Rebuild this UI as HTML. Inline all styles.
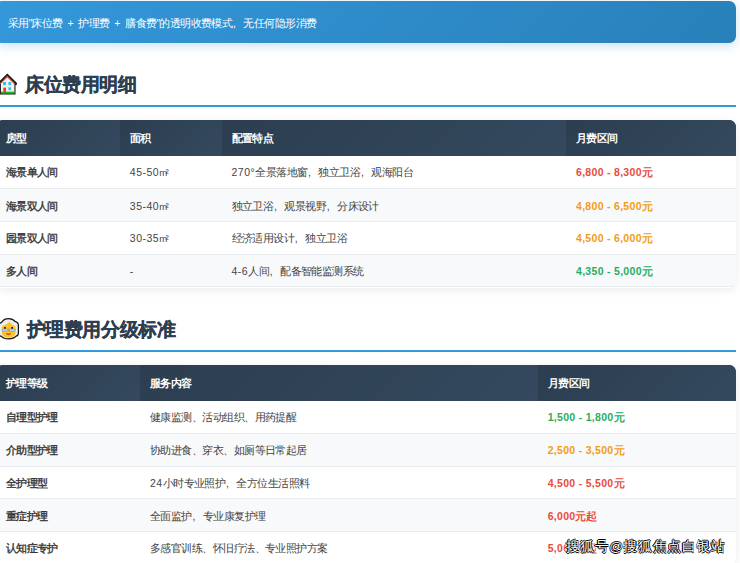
<!DOCTYPE html>
<html><head><meta charset="utf-8">
<style>
*{box-sizing:border-box;margin:0;padding:0}
html,body{width:740px;height:563px;overflow:hidden;background:#fff}
body{font-family:"Liberation Sans",sans-serif;color:#333;position:relative}
i{font-style:normal;letter-spacing:0}
i.c{display:inline-block;width:11px;padding-left:0.6px;letter-spacing:0}
.banner i{word-spacing:1.75px}
.banner i.q{letter-spacing:-1px}
b{font-weight:bold}
.banner{position:absolute;left:-5px;top:1px;width:741px;height:41.5px;border-radius:7px;
 background:linear-gradient(135deg,#3498db,#2980b9);box-shadow:0 3px 11px rgba(52,152,219,0.27);
 color:#fff;font-size:10.5px;letter-spacing:-0.55px}
.banner span{position:absolute;left:12.8px;top:14px;line-height:16px;white-space:nowrap}
.title{position:absolute;-webkit-text-stroke:0.3px #2c3e50;font-size:18.5px;letter-spacing:-0.4px;font-weight:bold;color:#2c3e50;line-height:24px;white-space:nowrap}
.line{position:absolute;left:-5px;width:741px;height:2px;background:#3498db}
.tbl{position:absolute;left:-4.4px;width:740.4px;border-radius:7px;overflow:hidden;box-shadow:0 2px 10px rgba(0,0,0,0.08);background:#fff}
.hbg{position:absolute;left:0;top:0;width:100%;height:36.2px;background:#2f4356}
.th{position:absolute;top:0;padding-top:1.2px;height:36.2px;line-height:35.8px;padding-left:10px;color:#fff;font-size:10.5px;letter-spacing:-0.55px;
 background:linear-gradient(135deg,#2c3e50,#34495e);white-space:nowrap}
.tr{position:absolute;left:0;width:100%;height:32.7px;background:#fff;border-bottom:1px solid #e9ecef}
.tr.odd{background:#f8f9fa}
.tr.last{}
.td{position:absolute;top:1.3px;height:31.7px;line-height:31.7px;padding-left:10px;font-size:10.5px;letter-spacing:-0.55px;color:#444;white-space:nowrap}
.td.n{font-weight:normal;-webkit-text-stroke:0.35px #333;color:#333}
.td.r{color:#e74c3c;font-weight:bold}
.td.o{color:#f39c12;font-weight:bold}
.td.g{color:#27ae60;font-weight:bold}
.td i{letter-spacing:0.5px}
.td i.m2{letter-spacing:0;font-size:9.6px}
i.m2 u{text-decoration:none;margin-left:-1.6px}
.td.r i,.td.o i,.td.g i{letter-spacing:0.3px}
.wm{position:absolute;left:565.5px;top:538.8px;font-size:13.5px;line-height:16px;letter-spacing:0.55px;color:#fff;white-space:nowrap;text-shadow:0.6px 0 0 #000,-0.6px 0 0 #000,0 0.6px 0 #000,0 -0.6px 0 #000,0.4px 0.4px 0 #000,-0.4px -0.4px 0 #000,0 0 3px #fff,0 0 3px #fff,0 0 4px #fff,0 0 4px #fff}
.icons{position:absolute;left:0;top:0}

</style></head><body>
<div class="banner"><span>采用<i class="q">"</i>床位费<i> + </i>护理费<i> + </i>膳食费<i class="q">"</i>的透明收费模式<i class="c">,</i>无任何隐形消费</span></div>
<div class="title" style="top:73.0px;left:25px">床位费用明细</div>
<div class="line" style="top:105px"></div>
<div class="tbl" style="top:120.0px;height:167.50px"><div class="hbg"></div>
<div class="th" style="left:0.00px;width:124.80px"><b>房型</b></div>
<div class="th" style="left:124.20px;width:102.30px"><b>面积</b></div>
<div class="th" style="left:225.90px;width:345.10px"><b>配置特点</b></div>
<div class="th" style="left:570.40px;width:170.00px"><b>月费区间</b></div>
<div class="tr" style="top:36.20px;height:33.2px;padding-top:0.5px">
<div class="td n" style="left:0.00px;width:124.20px">海景单人间</div>
<div class="td " style="left:124.20px;width:101.70px"><i>45-50</i><i class="m2">m<u>²</u></i></div>
<div class="td " style="left:225.90px;width:344.50px"><i>270°</i>全景落地窗<i class="c">,</i>独立卫浴<i class="c">,</i>观海阳台</div>
<div class="td r" style="left:570.40px;width:170.00px"><i>6,800 - 8,300</i>元</div>
</div>
<div class="tr odd" style="top:69.40px">
<div class="td n" style="left:0.00px;width:124.20px">海景双人间</div>
<div class="td " style="left:124.20px;width:101.70px"><i>35-40</i><i class="m2">m<u>²</u></i></div>
<div class="td " style="left:225.90px;width:344.50px">独立卫浴<i class="c">,</i>观景视野<i class="c">,</i>分床设计</div>
<div class="td o" style="left:570.40px;width:170.00px"><i>4,800 - 6,500</i>元</div>
</div>
<div class="tr" style="top:102.10px">
<div class="td n" style="left:0.00px;width:124.20px">园景双人间</div>
<div class="td " style="left:124.20px;width:101.70px"><i>30-35</i><i class="m2">m<u>²</u></i></div>
<div class="td " style="left:225.90px;width:344.50px">经济适用设计<i class="c">,</i>独立卫浴</div>
<div class="td o" style="left:570.40px;width:170.00px"><i>4,500 - 6,000</i>元</div>
</div>
<div class="tr odd last" style="top:134.80px">
<div class="td n" style="left:0.00px;width:124.20px">多人间</div>
<div class="td " style="left:124.20px;width:101.70px"><i>-</i></div>
<div class="td " style="left:225.90px;width:344.50px"><i>4-6</i>人间<i class="c">,</i>配备智能监测系统</div>
<div class="td g" style="left:570.40px;width:170.00px"><i>4,350 - 5,000</i>元</div>
</div>
</div>
<div class="title t2" style="top:317.6px;left:26.5px">护理费用分级标准</div>
<div class="line" style="top:350px"></div>
<div class="tbl" style="top:364.6px;height:200.20px"><div class="hbg"></div>
<div class="th" style="left:0.00px;width:145.00px"><b>护理等级</b></div>
<div class="th" style="left:144.40px;width:398.30px"><b>服务内容</b></div>
<div class="th" style="left:542.10px;width:198.30px"><b>月费区间</b></div>
<div class="tr" style="top:36.20px;height:33.2px;padding-top:0.5px">
<div class="td n" style="left:0.00px;width:144.40px">自理型护理</div>
<div class="td " style="left:144.40px;width:397.70px">健康监测、活动组织、用药提醒</div>
<div class="td g" style="left:542.10px;width:198.30px"><i>1,500 - 1,800</i>元</div>
</div>
<div class="tr odd" style="top:69.40px">
<div class="td n" style="left:0.00px;width:144.40px">介助型护理</div>
<div class="td " style="left:144.40px;width:397.70px">协助进食、穿衣、如厕等日常起居</div>
<div class="td o" style="left:542.10px;width:198.30px"><i>2,500 - 3,500</i>元</div>
</div>
<div class="tr" style="top:102.10px">
<div class="td n" style="left:0.00px;width:144.40px">全护理型</div>
<div class="td " style="left:144.40px;width:397.70px"><i>24</i>小时专业照护<i class="c">,</i>全方位生活照料</div>
<div class="td r" style="left:542.10px;width:198.30px"><i>4,500 - 5,500</i>元</div>
</div>
<div class="tr odd" style="top:134.80px">
<div class="td n" style="left:0.00px;width:144.40px">重症护理</div>
<div class="td " style="left:144.40px;width:397.70px">全面监护<i class="c">,</i>专业康复护理</div>
<div class="td r" style="left:542.10px;width:198.30px"><i>6,000</i>元起</div>
</div>
<div class="tr last" style="top:167.50px">
<div class="td n" style="left:0.00px;width:144.40px">认知症专护</div>
<div class="td " style="left:144.40px;width:397.70px">多感官训练、怀旧疗法、专业照护方案</div>
<div class="td r" style="left:542.10px;width:198.30px"><i>5,000</i>元起</div>
</div>
</div>
<svg class="icons" width="40" height="563" viewBox="0 0 40 563">
<!-- house -->
<polygon points="7.3,73.4 17.0,83.1 16.7,84.9 15.5,84.9 15.5,94.6 -0.3,94.6 -0.3,84.9 -1.6,84.9 -2.4,83.1" fill="#151515"/>
<polygon points="7.3,76.0 14.4,83.1 14.4,93.3 0.9,93.3 0.9,83.1" fill="#f3f3f3"/>
<polyline points="0.0,83.9 7.3,76.6 14.6,83.9" fill="none" stroke="#e2411f" stroke-width="1.1"/>
<rect x="3.1" y="82" width="2.9" height="3.1" fill="#25c4f4"/>
<rect x="8.4" y="82" width="2.7" height="3.1" fill="#25c4f4"/>
<rect x="8.4" y="87.3" width="2.7" height="2.9" fill="#25c4f4"/>
<rect x="0.9" y="91.6" width="13.5" height="1.7" fill="#18c018"/>
<rect x="3.3" y="87.6" width="2.7" height="4.8" fill="#e8401c"/>
<!-- older woman -->
<path d="M-2,323.6 C0,323.4 1.2,322.8 2,321.8 C3.5,319.5 6,318.6 8.6,318.6 C11.2,318.6 13.6,319.6 15,321.4 C17.2,322 18.4,323.6 18.4,325.4 L18.4,333.2 C18.4,334.8 17.4,335.8 16.2,336.2 C14.4,338.2 11.6,338.9 8.6,338.9 C5.6,338.9 3,338.2 1.4,336.4 C0.6,335.8 -0.8,335.6 -2,335.6 Z" fill="#ededed" stroke="#141414" stroke-width="1.25"/>
<path d="M1.9,326.3 C4.4,325.7 7.4,323.9 9.3,321.8 C11.2,323.9 13.6,325.7 15.4,326.3 L15.4,332.8 C15.4,336 12.6,337.7 8.6,337.7 C4.8,337.7 1.9,336 1.9,332.8 Z" fill="#fcc42b"/>
<rect x="4.1" y="327" width="1.7" height="1.9" fill="#161616"/>
<rect x="11.3" y="327" width="1.7" height="1.9" fill="#161616"/>
<rect x="1.9" y="328.8" width="5.6" height="2.6" rx="0.5" fill="#a08ee0"/>
<rect x="9.2" y="328.8" width="6.4" height="2.6" rx="0.5" fill="#a08ee0"/>
<rect x="2.5" y="329.4" width="4.4" height="1.4" fill="#a8e2f8"/>
<rect x="9.8" y="329.4" width="5.2" height="1.4" fill="#a8e2f8"/>
<rect x="7.9" y="328.3" width="1.3" height="3.2" fill="#f09a3a"/>
<path d="M6,333.1 C7,333.5 10,333.5 11,333.1 C10.8,334.6 9.8,335.2 8.5,335.2 C7.2,335.2 6.2,334.6 6,333.1 Z" fill="#e3442a"/>
</svg>

<div class="wm">搜狐号@搜狐焦点白银站</div>
</body></html>
